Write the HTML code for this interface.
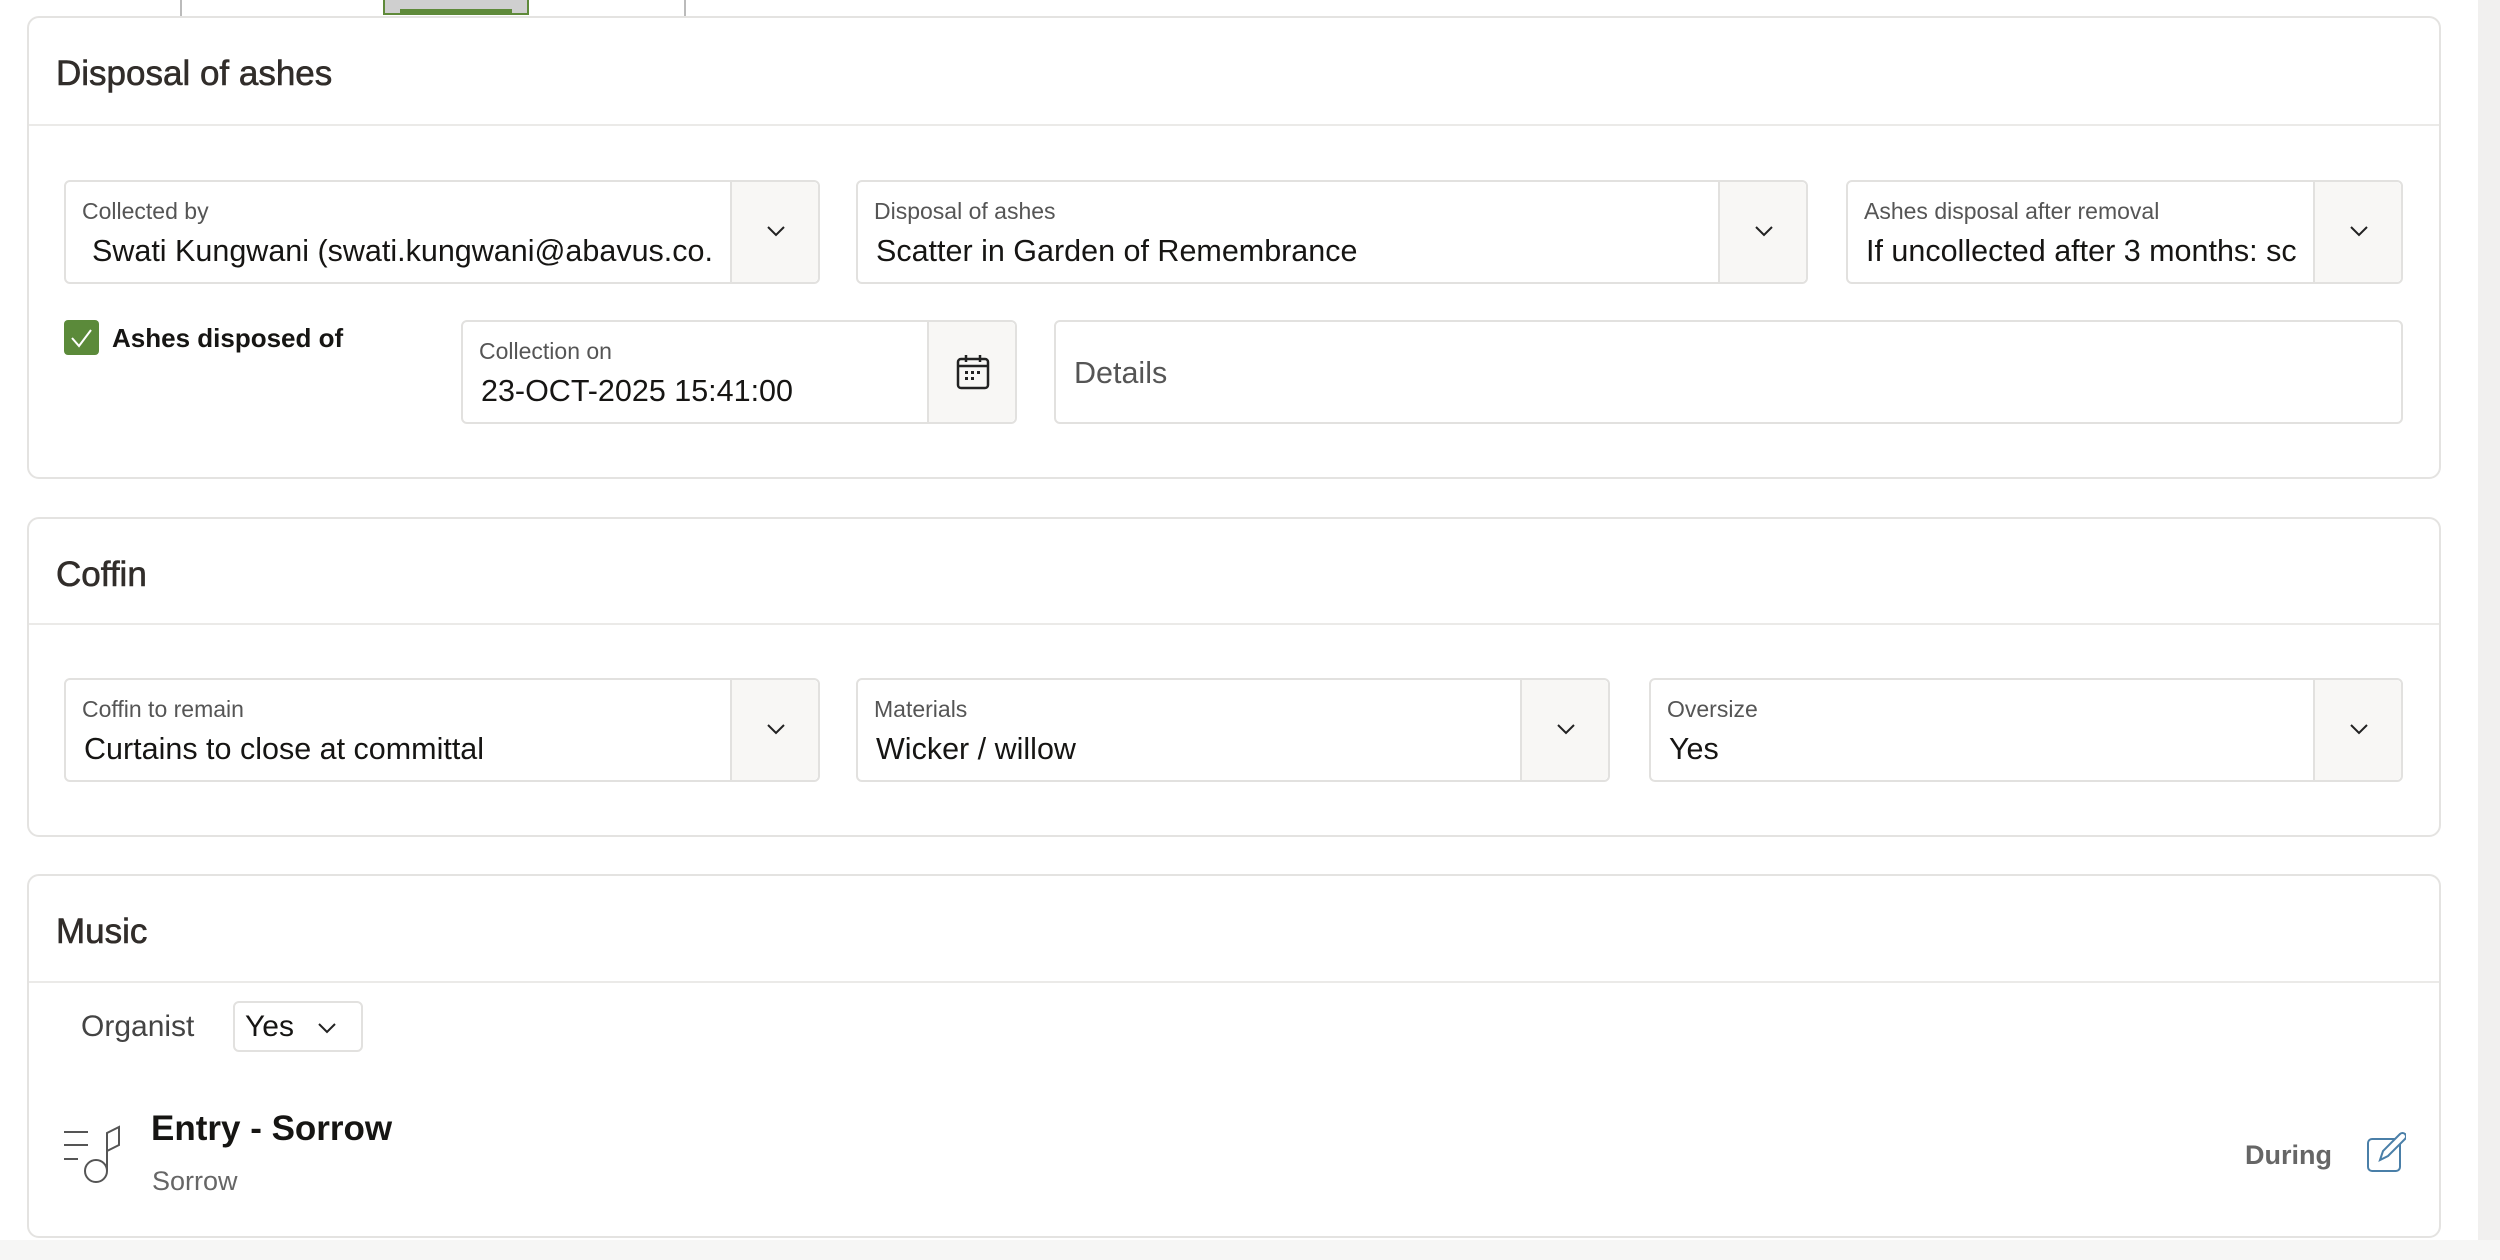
<!DOCTYPE html>
<html><head><meta charset="utf-8"><style>
*{box-sizing:border-box;margin:0;padding:0}
body{width:2500px;height:1260px;background:#fff;position:relative;overflow:hidden;font-family:"Liberation Sans",sans-serif;color:#161513}
.a{position:absolute}
.card{position:absolute;left:27px;width:2414px;background:#fff;border:2px solid #e4e3e1;border-radius:12px}
.hd{position:absolute;left:27px;font-size:35px;color:#312d2a;-webkit-text-stroke:0.6px #312d2a}
.div{position:absolute;left:0;right:0;height:2px;background:#ebeae8}
.f{position:absolute;border:2px solid #e2e1df;border-radius:6px;background:#fff;height:104px}
.f .lb{position:absolute;left:16px;top:16px;font-size:23px;color:#555}
.f .v{position:absolute;left:18px;top:52px;font-size:30.5px;color:#161513;white-space:nowrap;overflow:hidden}
.btn{position:absolute;top:0;right:0;bottom:0;width:88px;background:#f8f7f5;border-left:2px solid #e2e1df;border-radius:0 5px 5px 0}
.btn svg{position:absolute;left:34px;top:42px}
</style></head><body>
<div class="a" style="left:180px;top:0;width:2px;height:16px;background:#bbb"></div>
<div class="a" style="left:684px;top:0;width:2px;height:16px;background:#bbb"></div>
<div class="a" style="left:383px;top:0;width:146px;height:15px;background:#cfcfcf;border:2px solid #5f8a3a;border-top:none"></div>
<div class="a" style="left:400px;top:9px;width:112px;height:6px;background:#5f8a3a"></div>
<div class="a" style="left:2478px;top:0;width:22px;height:1260px;background:#f1f0ef"></div>
<div class="a" style="left:0;top:1240px;width:2500px;height:20px;background:#f6f6f5"></div>

<div class="card" style="top:16px;height:463px">
 <div class="hd" style="top:36px">Disposal of ashes</div>
 <div class="div" style="top:106px"></div>
</div>
<div class="f" style="left:64px;top:180px;width:756px"><div class="lb">Collected by</div><div class="v" style="left:26px;width:640px">Swati Kungwani (swati.kungwani@abavus.co.</div><div class="btn"><svg width="20" height="14"><path d="M2 3l8 8 8-8" fill="none" stroke="#222" stroke-width="2"/></svg></div></div>
<div class="f" style="left:856px;top:180px;width:952px"><div class="lb">Disposal of ashes</div><div class="v">Scatter in Garden of Remembrance</div><div class="btn"><svg width="20" height="14"><path d="M2 3l8 8 8-8" fill="none" stroke="#222" stroke-width="2"/></svg></div></div>
<div class="f" style="left:1846px;top:180px;width:557px"><div class="lb">Ashes disposal after removal</div><div class="v" style="width:440px">If uncollected after 3 months: sc</div><div class="btn"><svg width="20" height="14"><path d="M2 3l8 8 8-8" fill="none" stroke="#222" stroke-width="2"/></svg></div></div>

<div class="a" style="left:64px;top:320px;width:35px;height:35px;background:#5b8a3a;border-radius:4px"><svg width="35" height="35"><path d="M8 18l7 8 12-16" fill="none" stroke="#fff" stroke-width="2"/></svg></div>
<div class="a" style="left:112px;top:323px;font-size:26px;font-weight:bold">Ashes disposed of</div>
<div class="f" style="left:461px;top:320px;width:556px"><div class="lb">Collection on</div><div class="v">23-OCT-2025 15:41:00</div><div class="btn"><svg width="36" height="40" style="left:26px;top:30px"><rect x="3" y="7" width="30" height="29" rx="3" fill="none" stroke="#222" stroke-width="2.5"/><path d="M3 14h30M11 3v7M25 3v7" stroke="#222" stroke-width="2.5"/><g fill="#222"><rect x="10" y="19" width="3" height="3"/><rect x="16" y="19" width="3" height="3"/><rect x="22" y="19" width="3" height="3"/><rect x="10" y="25" width="3" height="3"/><rect x="16" y="25" width="3" height="3"/></g></svg></div></div>
<div class="f" style="left:1054px;top:320px;width:1349px"><div class="v" style="top:34px;color:#555">Details</div></div>

<div class="card" style="top:517px;height:320px">
 <div class="hd" style="top:36px">Coffin</div>
 <div class="div" style="top:104px"></div>
</div>
<div class="f" style="left:64px;top:678px;width:756px"><div class="lb">Coffin to remain</div><div class="v">Curtains to close at committal</div><div class="btn"><svg width="20" height="14"><path d="M2 3l8 8 8-8" fill="none" stroke="#222" stroke-width="2"/></svg></div></div>
<div class="f" style="left:856px;top:678px;width:754px"><div class="lb">Materials</div><div class="v">Wicker / willow</div><div class="btn"><svg width="20" height="14"><path d="M2 3l8 8 8-8" fill="none" stroke="#222" stroke-width="2"/></svg></div></div>
<div class="f" style="left:1649px;top:678px;width:754px"><div class="lb">Oversize</div><div class="v">Yes</div><div class="btn"><svg width="20" height="14"><path d="M2 3l8 8 8-8" fill="none" stroke="#222" stroke-width="2"/></svg></div></div>

<div class="card" style="top:874px;height:364px">
 <div class="hd" style="top:36px">Music</div>
 <div class="div" style="top:105px"></div>
</div>
<div class="a" style="left:81px;top:1010px;font-size:30px;color:#444">Organist</div>
<div class="a" style="left:233px;top:1001px;width:130px;height:51px;border:2px solid #e2e1df;border-radius:6px"><span class="a" style="left:10px;top:7px;font-size:30px">Yes</span><svg class="a" style="left:82px;top:18px" width="20" height="14"><path d="M2 3l8 8 8-8" fill="none" stroke="#222" stroke-width="2"/></svg></div>
<svg class="a" style="left:62px;top:1120px" width="66" height="66"><path d="M2 12h24M2 25h24M2 39h14" stroke="#555" stroke-width="2"/><circle cx="34" cy="51" r="11" fill="none" stroke="#555" stroke-width="2"/><path d="M45 51V13l12-6v18l-12 6" fill="none" stroke="#555" stroke-width="2"/></svg>
<div class="a" style="left:151px;top:1109px;font-size:35px;font-weight:bold">Entry - Sorrow</div>
<div class="a" style="left:152px;top:1166px;font-size:27px;color:#666">Sorrow</div>
<div class="a" style="left:2245px;top:1140px;font-size:27px;font-weight:bold;color:#666">During</div>
<svg class="a" style="left:2366px;top:1130px" width="40" height="42"><rect x="2" y="9" width="32" height="32" rx="4" fill="none" stroke="#4a7fa8" stroke-width="2"/><path d="M14 30l3-9 17-17a3 3 0 0 1 5 5L22 26z" fill="#fff" stroke="#4a7fa8" stroke-width="2"/></svg>
</body></html>
